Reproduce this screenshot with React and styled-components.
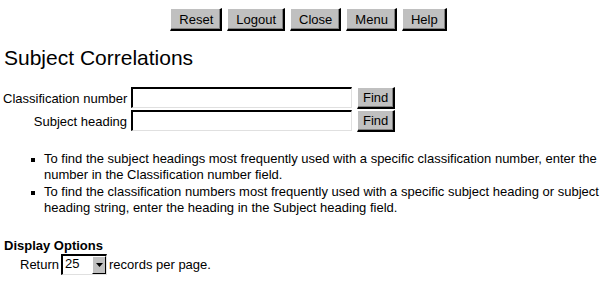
import React from 'react';
import styled, { createGlobalStyle } from 'styled-components';

const GlobalStyle = createGlobalStyle`
  html, body {
    margin: 0;
    padding: 0;
    background: #ffffff;
  }
  body {
    font-family: "Liberation Sans", Arial, sans-serif;
    font-size: 13px;
    color: #000;
  }
`

const Page = styled.div`
  width: 616px;
  height: 285px;
  overflow: hidden;
  padding: 0 4px;
  box-sizing: border-box;
`

const Toolbar = styled.div`
  display: flex;
  justify-content: center;
  gap: 5px;
  padding-top: 8px;
  padding-left: 1px;
`

const Button = styled.button`
  font-family: "Liberation Sans", Arial, sans-serif;
  font-size: 13px;
  color: #000;
  background: #c0c0c0;
  height: ${p => p.$h || 23}px;
  padding: 0 ${p => p.$pad || 7}px 0 ${p => p.$pad || 8}px;
  margin: 0;
  border-style: solid;
  border-width: 1px 2px 2px 1px;
  border-color: #ffffff #000000 #000000 #ffffff;
  box-shadow: inset -1px -1px 0 #808080;
  line-height: 1;
  cursor: pointer;
`

const Title = styled.h1`
  font-size: 21px;
  font-weight: normal;
  margin: 14px 0 0 0;
  line-height: 26px;
`

const Form = styled.div`
  display: grid;
  grid-template-columns: 124px auto;
  column-gap: 4px;
  row-gap: 1px;
  margin-top: 16px;
  margin-left: -1px;
`

const Label = styled.label`
  text-align: right;
  align-self: center;
  white-space: nowrap;
`

const Field = styled.div`
  display: flex;
  align-items: flex-start;
  gap: 5px;
`

const TextInput = styled.input`
  width: 221px;
  height: 21px;
  box-sizing: border-box;
  margin: 0;
  padding: 0 2px;
  border-style: solid;
  border-width: 2px 1px 1px 2px;
  border-color: #000000 #e0e0e0 #e0e0e0 #000000;
  background: #fff;
  font-family: "Liberation Sans", Arial, sans-serif;
  font-size: 13px;
`

const Tips = styled.ul`
  list-style: none;
  margin: 19px 0 0 0;
  padding: 0 0 0 27px;
`

const Tip = styled.li`
  position: relative;
  padding-left: 13px;
  line-height: 16px;
  margin-bottom: 1px;
  &::before {
    content: "";
    position: absolute;
    left: 0;
    top: 7px;
    width: 4px;
    height: 4px;
    background: #000;
  }
`

const SectionHead = styled.div`
  font-weight: bold;
  margin-top: 22px;
  line-height: 15px;
`

const OptionRow = styled.div`
  display: flex;
  align-items: center;
  gap: 2px;
  padding-left: 16px;
  margin-top: 1px;
`

const SelectBox = styled.div`
  display: flex;
  align-items: stretch;
  width: 46px;
  height: 21px;
  box-sizing: border-box;
  border-style: solid;
  border-width: 2px 1px 1px 2px;
  border-color: #000000 #e0e0e0 #e0e0e0 #000000;
  background: #fff;
`

const SelectValue = styled.span`
  flex: 1;
  padding-left: 2px;
  line-height: 16px;
`

const SelectArrow = styled.span`
  width: 14px;
  background: #c0c0c0;
  box-sizing: border-box;
  border-style: solid;
  border-width: 1px 1px 1px 1px;
  border-color: #ffffff #000000 #000000 #ffffff;
  display: flex;
  align-items: center;
  justify-content: center;
`

const navItems = ['Reset', 'Logout', 'Close', 'Menu', 'Help'];

export default function App() {
  return (
    <>
      <GlobalStyle />
      <Page>
        <Toolbar>
          {navItems.map(n => <Button key={n}>{n}</Button>)}
        </Toolbar>
        <Title>Subject Correlations</Title>
        <Form>
          <Label>Classification number</Label>
          <Field>
            <TextInput type="text" />
            <Button $h={22} $pad={5}>Find</Button>
          </Field>
          <Label>Subject heading</Label>
          <Field>
            <TextInput type="text" />
            <Button $h={22} $pad={5}>Find</Button>
          </Field>
        </Form>
        <Tips>
          <Tip>To find the subject headings most frequently used with a specific classification number, enter the number in the Classification number field.</Tip>
          <Tip>To find the classification numbers most frequently used with a specific subject heading or subject heading string, enter the heading in the Subject heading field.</Tip>
        </Tips>
        <SectionHead>Display Options</SectionHead>
        <OptionRow>
          <span>Return</span>
          <SelectBox>
            <SelectValue>25</SelectValue>
            <SelectArrow>
              <svg width="7" height="4" viewBox="0 0 7 4"><path d="M0 0h7L3.5 4z" fill="#000" /></svg>
            </SelectArrow>
          </SelectBox>
          <span>records per page.</span>
        </OptionRow>
      </Page>
    </>
  );
}
